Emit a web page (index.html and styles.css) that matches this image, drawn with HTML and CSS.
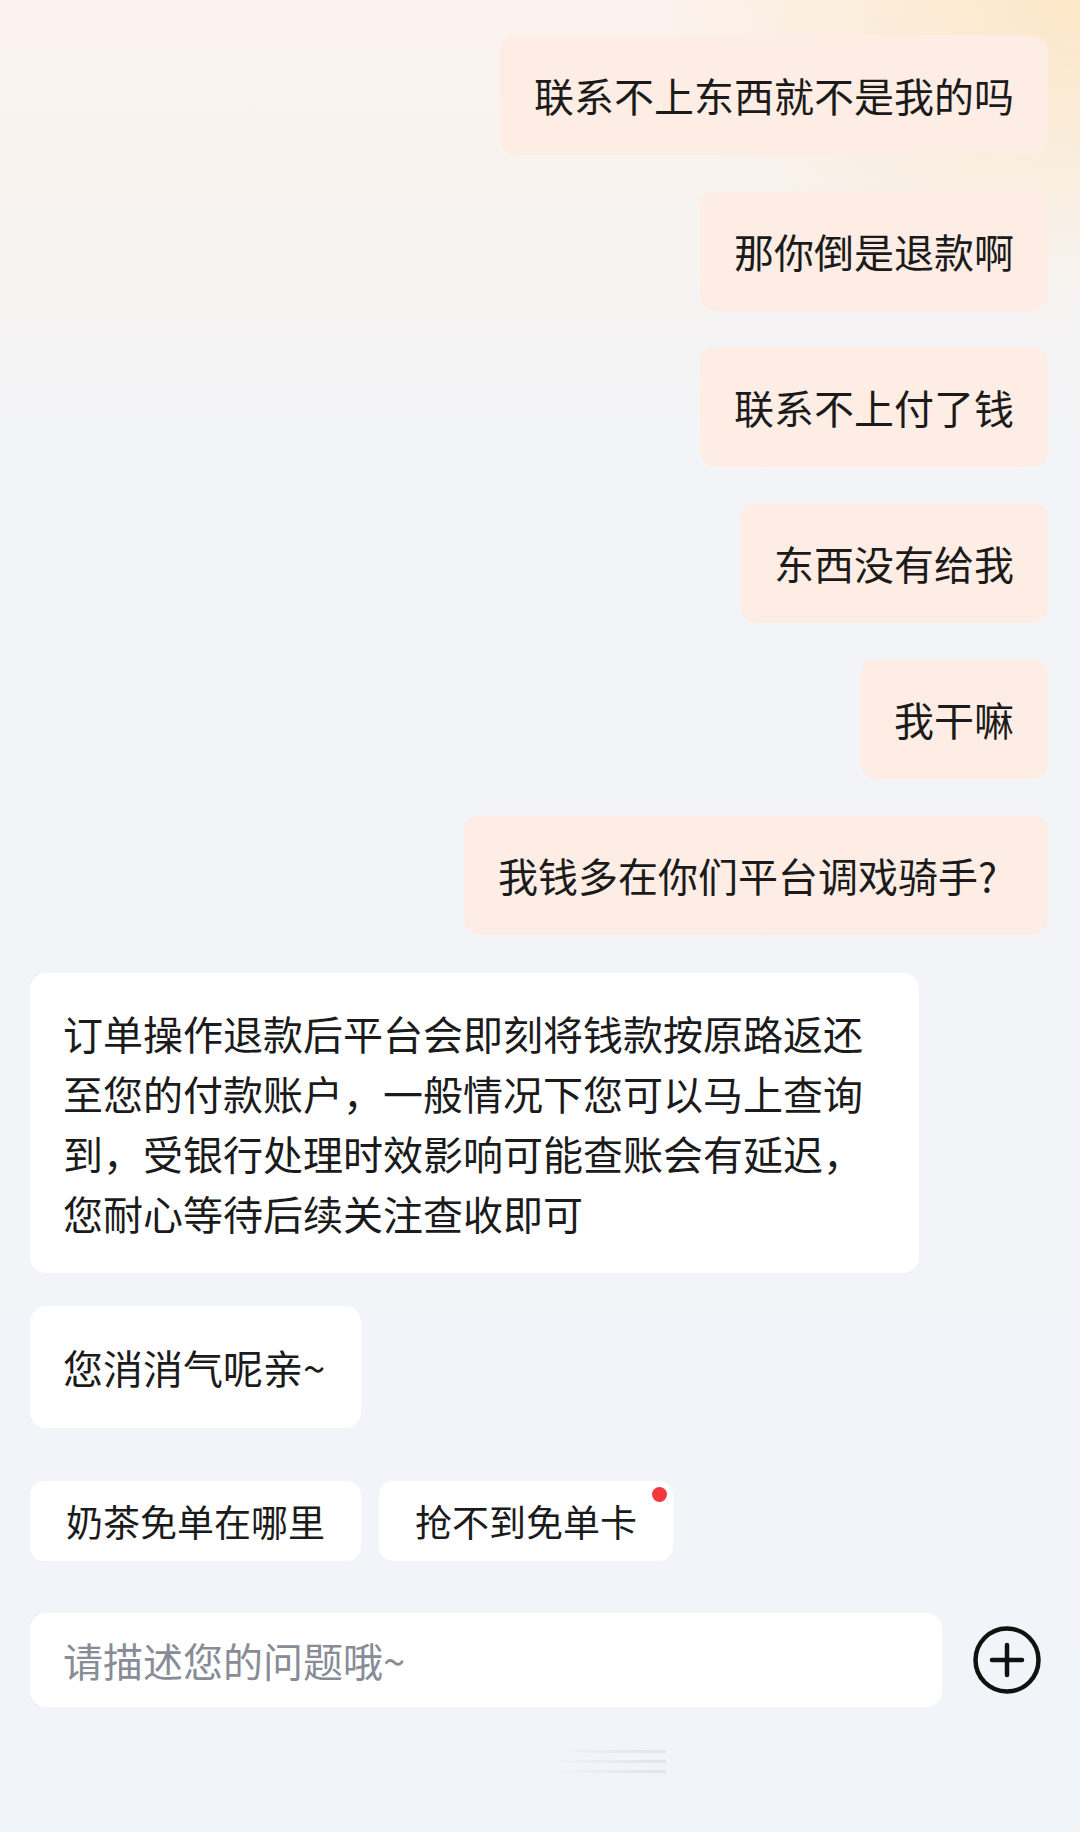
FILE: index.html
```html
<!DOCTYPE html>
<html lang="zh-CN">
<head>
  <meta charset="UTF-8" />
  <meta name="viewport" content="width=device-width, initial-scale=1" />
  <title>在线客服</title>
  <link rel="stylesheet" href="styles.css">
</head>
<body>

<main class="chat">
  <div class="msg msg-user">联系不上东西就不是我的吗</div>
  <div class="msg msg-user">那你倒是退款啊</div>
  <div class="msg msg-user">联系不上付了钱</div>
  <div class="msg msg-user">东西没有给我</div>
  <div class="msg msg-user">我干嘛</div>
  <div class="msg msg-user msg-question">我钱多在你们平台调戏骑手?</div>
  <div class="msg msg-bot msg-long">订单操作退款后平台会即刻将钱款按原路返还至您的付款账户，一般情况下您可以马上查询到，受银行处理时效影响可能查账会有延迟，您耐心等待后续关注查收即可</div>
  <div class="msg msg-bot msg-short">您消消气呢亲~</div>
</main>

<div class="quick-replies">
  <span class="chip">奶茶免单在哪里</span>
  <span class="chip chip-new">抢不到免单卡</span>
</div>

<div class="input-bar">
  <div class="input-box">请描述您的问题哦~</div>
  <button class="plus-btn" aria-label="更多">
    <svg width="68" height="68" viewBox="0 0 68 68">
      <circle cx="34" cy="34" r="31.5" fill="none" stroke="#111" stroke-width="4.5"/>
      <path d="M34 19v30M19 34h30" stroke="#111" stroke-width="4.5" stroke-linecap="round"/>
    </svg>
  </button>
</div>

<div class="home-bar"></div>

</body>
</html>
```

FILE: styles.css
```css
body {
  margin: 0;
  padding: 0;
  min-height: 1832px;
  font-family: "Noto Sans CJK SC", "Noto Sans", sans-serif;
  color: #1b1b1b;
  background:
    radial-gradient(ellipse 420px 300px at 100% 0, rgba(252, 226, 186, 0.75), rgba(252, 226, 186, 0) 100%),
    linear-gradient(180deg, #fcf3ee 0, #f8f3ef 180px, #f2f4f8 480px, #f1f4f8 100%);
}

.chat {
  display: flex;
  flex-direction: column;
  gap: 36px;
  padding: 35px 32px 0 30px;
}

.msg {
  font-size: 40px;
  line-height: 60px;
  padding: 30px 34px;
  border-radius: 16px;
  box-sizing: border-box;
}

.msg-user {
  align-self: flex-end;
  background-color: #fdede4;
}

.msg-question {
  padding-right: 51px;
}

.msg-bot {
  align-self: flex-start;
  background-color: #fff;
  padding: 30px 33px;
}

.msg-long {
  max-width: 889px;
  margin-top: 2px;
}

.msg-short {
  margin-top: -3px;
  padding: 31px 36px 31px 33px;
}

.quick-replies {
  display: flex;
  gap: 18px;
  padding: 53px 30px 0;
}

.chip {
  position: relative;
  background-color: #fff;
  border-radius: 14px;
  font-size: 37px;
  height: 80px;
  line-height: 80px;
  padding: 0 36px;
}

.chip-new::after {
  content: "";
  position: absolute;
  top: 6px;
  right: 6px;
  width: 15px;
  height: 15px;
  border-radius: 50%;
  background-color: #f0393d;
}

.input-bar {
  display: flex;
  align-items: center;
  gap: 31px;
  padding: 52px 39px 0 30px;
}

.input-box {
  flex: 1;
  height: 94px;
  line-height: 94px;
  background-color: #fff;
  border-radius: 16px;
  padding-left: 33px;
  font-size: 40px;
  color: #878c96;
}

.plus-btn {
  width: 68px;
  height: 68px;
  padding: 0;
  border: none;
  background: none;
  display: flex;
}

.home-bar {
  width: 110px;
  height: 30px;
  margin: 36px 0 0 556px;
  background: repeating-linear-gradient(180deg, rgba(255, 255, 255, 0) 0, rgba(255, 255, 255, 0) 7px, rgba(222, 226, 233, 0.8) 7px, rgba(222, 226, 233, 0.8) 10px);
  -webkit-mask-image: linear-gradient(90deg, transparent, #000 85%);
  mask-image: linear-gradient(90deg, transparent, #000 85%);
}
```
